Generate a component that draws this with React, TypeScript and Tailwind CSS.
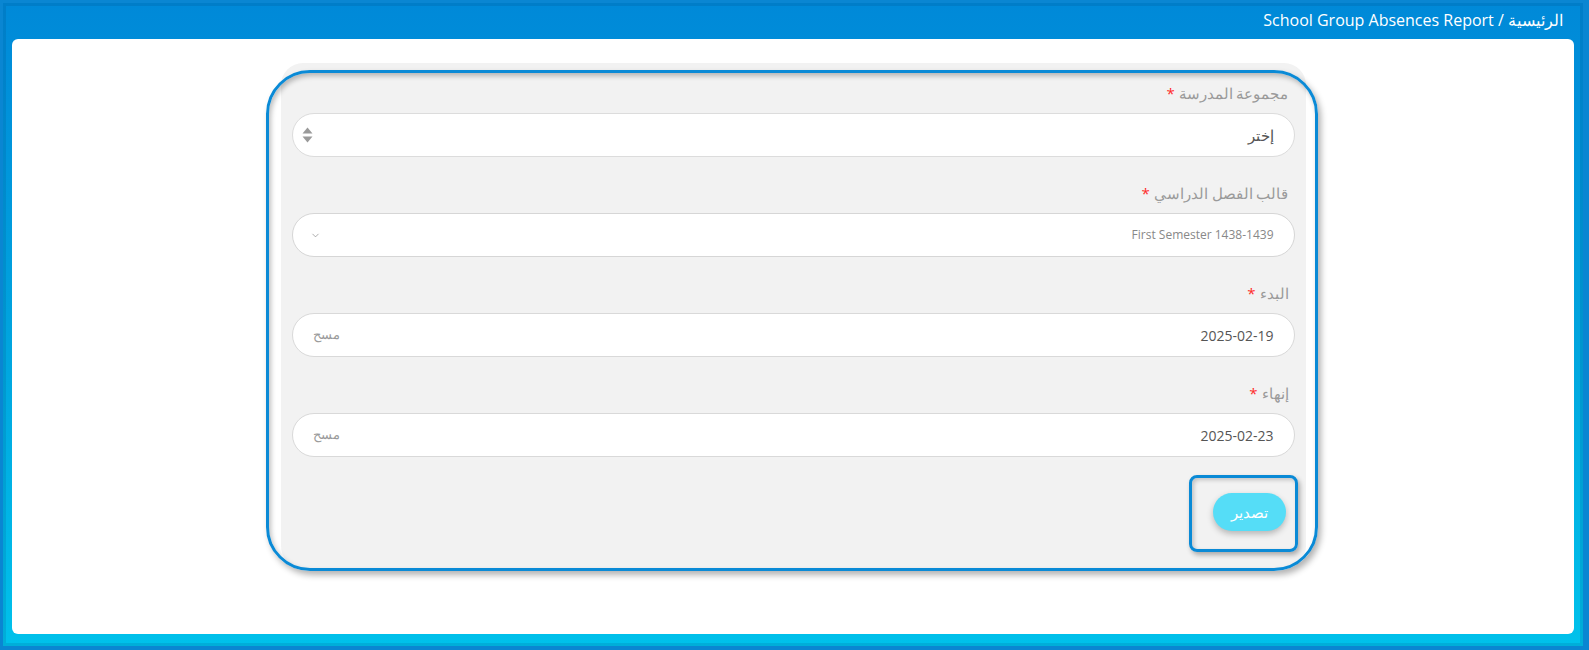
import { ChevronDown } from 'lucide-react';

const font = { fontFamily: '"Open Sans", "Noto Sans", sans-serif' };

type FieldProps = {
    label: string;
    children: React.ReactNode;
};

const Field = ({ label, children }: FieldProps) => (
    <div className="pb-[26px]">
        <label className="block h-[20px] leading-[20px] text-[15px] text-[#9a9a9a] mb-[10px] pr-[6px]">
            {label} <span className="text-[#ff2a2a]">*</span>
        </label>
        {children}
    </div>
);

const DateInput = ({ value }: { value: string }) => (
    <div className="h-[44px] rounded-full bg-white border border-[#d9d9d9] flex items-center justify-between pr-[20px] pl-[20px]">
        <span className="text-[14px] text-[#555]">{value}</span>
        <span className="text-[13px] text-[#9a9a9a]">مسح</span>
    </div>
);

export default function App() {
    return (
        <div className="h-[650px] w-full bg-[#0a86d2] pt-[3px] pl-[3px] pr-[6px] pb-[4px]" style={font}>
            <div className="h-full flex flex-col bg-gradient-to-b from-[#0089d8] via-[#00a3de] to-[#00c1eb] shadow-[inset_0_0_0_3px_rgba(0,40,90,0.12)]">
                {/* breadcrumb */}
                <div dir="rtl" className="h-[36px] flex items-center pr-[20px] pb-[2px] text-[16px] text-white">
                    الرئيسية / School Group Absences Report
                </div>

                <div className="flex-1 ml-[9px] mr-[9px] mb-[12px] bg-white rounded-[6px] pt-[24px]">
                    <div dir="rtl" className="relative mx-auto w-[1025px] bg-[#f2f2f2] rounded-t-[22px] rounded-b-[22px] pt-[20px] pb-[37px] px-[11px]">
                        {/* highlight outline */}
                        <div className="pointer-events-none absolute top-[7px] -bottom-[3px] -left-[15px] -right-[12px] rounded-[44px] border-[3px] border-[#0a8ad6] shadow-[3px_4px_6px_rgba(0,0,0,0.3),inset_2px_3px_5px_rgba(0,0,0,0.25)]" />

                        <Field label="مجموعة المدرسة">
                            <div className="h-[44px] rounded-full bg-white border border-[#dcdcdc] flex items-center justify-between pr-[20px] pl-[9px]">
                                <span className="text-[15px] text-[#555]">إختر</span>
                                <svg width="11" height="16" viewBox="0 0 11 16">
                                    <path d="M5.5 0.5 L10.5 6.5 H0.5 Z" fill="#9a9a9a" />
                                    <path d="M5.5 15.5 L10.5 9.5 H0.5 Z" fill="#9a9a9a" />
                                </svg>
                            </div>
                        </Field>

                        <Field label="قالب الفصل الدراسي">
                            <div className="h-[44px] rounded-full bg-white border border-[#d6d6d6] flex items-center justify-between pr-[20px] pl-[17px]">
                                <span dir="ltr" className="text-[12px] text-[#888]">First Semester 1438-1439</span>
                                <ChevronDown size={11} strokeWidth={1.5} className="text-[#888]" />
                            </div>
                        </Field>

                        <Field label="البدء">
                            <DateInput value="2025-02-19" />
                        </Field>

                        <Field label="إنهاء">
                            <DateInput value="2025-02-23" />
                        </Field>

                        <div className="flex justify-start pr-[9px] pt-[10px]">
                            <div className="relative">
                                <div className="pointer-events-none absolute -top-[18px] -bottom-[21px] -right-[12px] -left-[24px] rounded-[8px] border-[3px] border-[#0a8ad6] shadow-[2px_3px_5px_rgba(0,0,0,0.3),inset_2px_2px_4px_rgba(0,0,0,0.2)]" />
                                <button className="h-[38px] w-[73px] rounded-full bg-[#55ddf7] text-white text-[15px] shadow-[0_3px_6px_rgba(0,0,0,0.25)]">
                                    تصدير
                                </button>
                            </div>
                        </div>
                    </div>
                </div>
            </div>
        </div>
    );
}
